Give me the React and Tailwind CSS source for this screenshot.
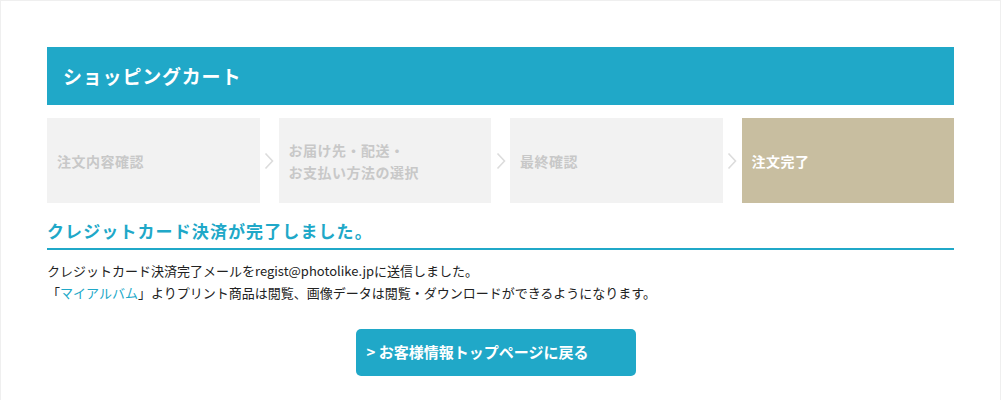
import React from 'react';

const BLUE = '#20a8c8';

const STEPS = [
  { label: ['注文内容確認'] },
  { label: ['お届け先・配送・', 'お支払い方法の選択'] },
  { label: ['最終確認'] },
  { label: ['注文完了'], active: true },
];

function Chevron() {
  return (
    <div className="w-[19px] flex items-center justify-center shrink-0">
      <svg width="10" height="18" viewBox="0 0 10 18" fill="none">
        <path d="M1.5 1.5L8.5 9L1.5 16.5" stroke="#dcdcdc" strokeWidth="1.6" />
      </svg>
    </div>
  );
}

export default function App() {
  return (
    <div
      className="min-h-[400px] bg-white border-l border-r border-t border-[#efefef] text-[#333]"
      style={{ fontFamily: '"Noto Sans CJK JP", "Noto Sans", sans-serif' }}
    >
      <div className="w-[907px] ml-[46px] pt-[46px]">
        {/* header */}
        <div className="h-[58px] flex items-center px-4" style={{ backgroundColor: BLUE }}>
          <h1 className="text-[19px] font-bold text-white tracking-[0.8px]">ショッピングカート</h1>
        </div>

        {/* steps */}
        <div className="flex mt-[13px] h-[85px]">
          {STEPS.map((s, i) => (
            <React.Fragment key={i}>
              {i > 0 && <Chevron />}
              <div
                className={`flex-1 flex flex-col justify-center pl-[10px] text-[14px] font-bold leading-[22px] tracking-[0.5px] ${s.active ? 'bg-[#c8bea0] text-white' : 'bg-[#f2f2f2] text-[#c8c8c8]'}`}
              >
                {s.label.map(l => <span key={l}>{l}</span>)}
              </div>
            </React.Fragment>
          ))}
        </div>

        {/* message */}
        <h2 className="mt-[14px] text-[17px] font-bold leading-[28px] pb-[3px] border-b-2 tracking-[1.1px]" style={{ color: BLUE, borderColor: BLUE }}>
          クレジットカード決済が完了しました。
        </h2>
        <div className="mt-[10px] text-[13px] leading-[22px] text-[#222]">
          <p>クレジットカード決済完了メールをregist@photolike.jpに送信しました。</p>
          <p>
            「<a href="#" className="text-[#20a8c8]">マイアルバム</a>」よりプリント商品は閲覧、画像データは閲覧・ダウンロードができるようになります。
          </p>
        </div>

        {/* button */}
        <div className="flex justify-center pr-[10px] mt-[25px]">
          <button
            className="w-[280px] h-[47px] rounded-[5px] text-left pl-[11px] text-white text-[15px] font-bold"
            style={{ backgroundColor: BLUE }}
          >
            &gt; お客様情報トップページに戻る
          </button>
        </div>
      </div>
    </div>
  );
}
